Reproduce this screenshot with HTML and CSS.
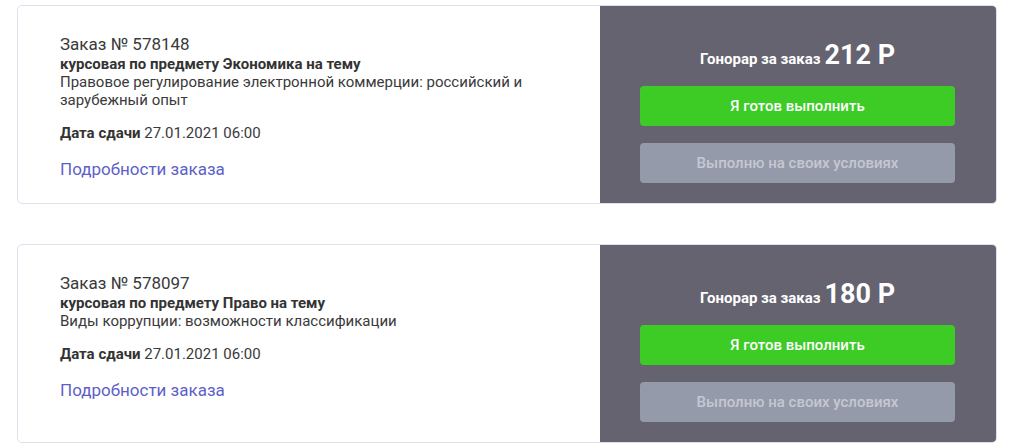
FILE: index.html
```html
<!DOCTYPE html>
<html lang="ru">
<head>
<meta charset="UTF-8">
<title>Заказы</title>
<link rel="stylesheet" href="styles.css">
</head>
<body>
<div class="orders">
  <div class="order">
    <div class="order-info">
      <div class="order-num">Заказ № 578148</div>
      <div class="order-subject">курсовая по предмету Экономика на тему</div>
      <div class="order-theme">Правовое регулирование электронной коммерции: российский и зарубежный опыт</div>
      <div class="order-date"><b>Дата сдачи</b> 27.01.2021 06:00</div>
      <a class="order-link" href="#">Подробности заказа</a>
    </div>
    <div class="order-side">
      <div class="fee"><span class="fee-label">Гонорар за заказ</span> <span class="fee-sum">212 Р</span></div>
      <button class="btn btn-accept">Я готов выполнить</button>
      <button class="btn btn-offer">Выполню на своих условиях</button>
    </div>
  </div>
  <div class="order">
    <div class="order-info">
      <div class="order-num">Заказ № 578097</div>
      <div class="order-subject">курсовая по предмету Право на тему</div>
      <div class="order-theme">Виды коррупции: возможности классификации</div>
      <div class="order-date"><b>Дата сдачи</b> 27.01.2021 06:00</div>
      <a class="order-link" href="#">Подробности заказа</a>
    </div>
    <div class="order-side">
      <div class="fee"><span class="fee-label">Гонорар за заказ</span> <span class="fee-sum">180 Р</span></div>
      <button class="btn btn-accept">Я готов выполнить</button>
      <button class="btn btn-offer">Выполню на своих условиях</button>
    </div>
  </div>
</div>
</body>
</html>
```

FILE: styles.css
```css
body {
	margin: 0;
	background: #ffffff;
	font-family: Roboto, "Liberation Sans", sans-serif;
	color: #333333;
}
.orders {
	padding: 5px 19px 0 17px;
	display: flex;
	flex-direction: column;
	gap: 40px;
}
.order {
	display: flex;
	border: 1px solid #e1e0ec;
	border-radius: 5px;
	overflow: hidden;
	height: 197px;
}
.order-info {
	flex: 1;
	padding: 28px 40px 0 42px;
}
.order-num {
	font-size: 17px;
	line-height: 21px;
	color: #3a3a3a;
}
.order-subject {
	font-size: 15px;
	line-height: 18px;
	font-weight: bold;
	color: #333333;
}
.order-theme {
	font-size: 15px;
	line-height: 18px;
	color: #3a3a3a;
}
.order-date {
	margin-top: 15px;
	font-size: 15px;
	line-height: 18px;
	color: #3a3a3a;
}
.order-date b {
	color: #333333;
}
.order-link {
	display: block;
	margin-top: 17px;
	font-size: 17px;
	line-height: 20px;
	color: #5e5fc8;
	text-decoration: none;
}
.order-side {
	width: 315px;
	padding: 34px 41px 0 40px;
	background: #64636f;
	display: flex;
	flex-direction: column;
}
.fee {
	text-align: center;
	color: #ffffff;
	font-weight: bold;
	line-height: 30px;
	margin-bottom: 12px;
}
.fee-label {
	font-size: 15px;
}
.fee-sum {
	font-size: 27px;
}
.btn {
	display: block;
	width: 100%;
	height: 40px;
	border: 0;
	border-radius: 4px;
	font-family: Roboto, "Liberation Sans", sans-serif;
	font-size: 15px;
	font-weight: 500;
	cursor: pointer;
}
.btn-accept {
	background: #3dcb25;
	color: #ffffff;
}
.btn-offer {
	margin-top: 17px;
	background: #959aab;
	color: #c6c8d0;
}
```
